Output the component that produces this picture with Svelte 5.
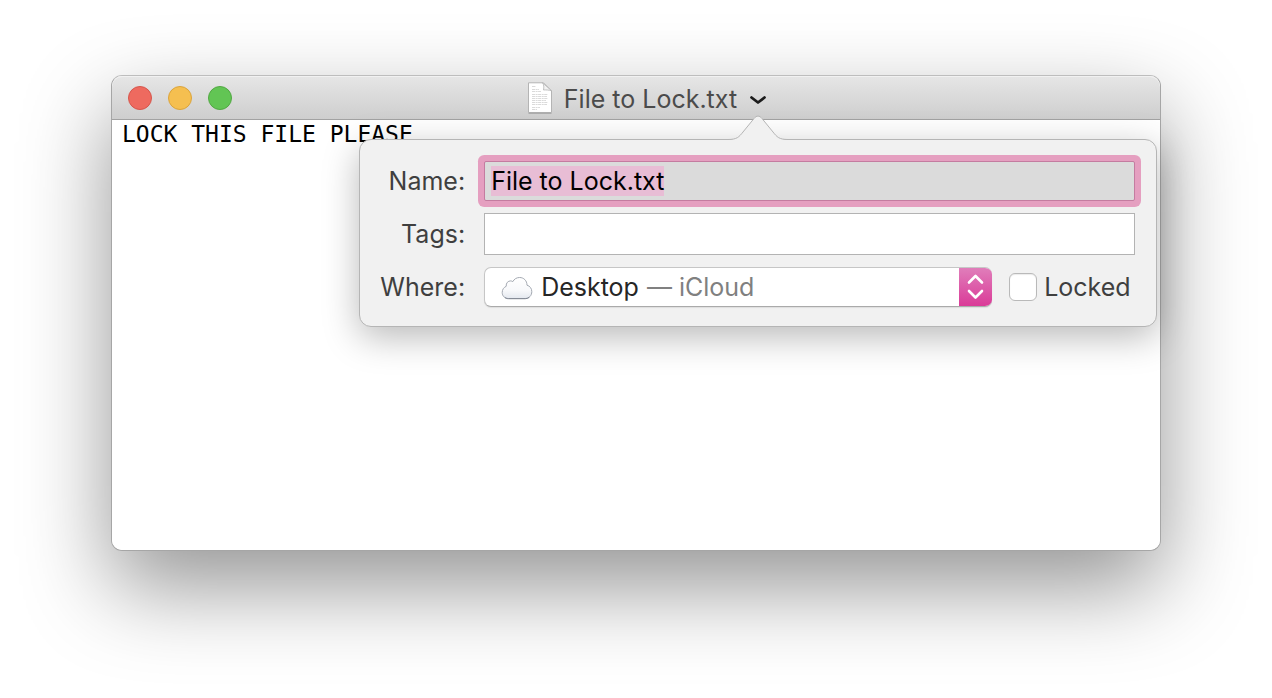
<script lang="ts">
  import { onMount } from 'svelte';

  let name = $state('File to Lock.txt');
  let tags = $state('');
  let place = $state('Desktop');
  let locked = $state(false);
  let body = $state('LOCK THIS FILE PLEASE');
  let open = $state(true);

  let nameInput: HTMLInputElement;

  // lines of tiny print on the document icon: y, start, end
  const print = [
    [4, 5, 9], [7, 5, 12], [9, 5, 14], [12, 5, 21], [14, 5, 20], [16, 5, 21],
    [18, 5, 19], [20, 5, 21], [22, 5, 20], [25, 5, 13], [27, 5, 10]
  ];

  onMount(() => {
    nameInput.focus();
    nameInput.select();
  });
</script>

<main class="desktop">
  <section class="window">
    <header class="titlebar">
      <div class="lights">
        <button class="light close" aria-label="Close"></button>
        <button class="light minimize" aria-label="Minimize"></button>
        <button class="light zoom" aria-label="Zoom"></button>
      </div>

      <div class="title">
        <svg class="doc" width="26" height="32" viewBox="0 0 26 32" aria-hidden="true">
          <path d="M1.5 .8H16.5L24.5 8.8V30.5H1.5Z" fill="#fff" stroke="#b4b4b4" stroke-width="1" />
          {#each print as [y, from, to]}
            <path d="M{from} {y + 0.5}H{to}" stroke="#dadada" stroke-width="1" stroke-dasharray="3 .6 2 .5" />
          {/each}
          <path d="M15.5 .8C17 3 17 5 16.5 8C19 7.8 22 8 24.5 8.8Z" fill="#f2f2f2" stroke="#b4b4b4" stroke-width=".8" />
          <path d="M1.5 31.3H24.5" stroke="#999" stroke-width=".8" />
        </svg>
        <span>{name}</span>
      </div>

      <div class="anchor">
        <button class="disclose" aria-label="Document options" onclick={() => open = !open}>
          <svg width="18" height="12" viewBox="0 0 18 12" aria-hidden="true">
            <path d="M2.5 3.5L9 8.5L15.5 3.5" fill="none" stroke="#1c1c1c" stroke-width="2.8" stroke-linecap="round" stroke-linejoin="round" />
          </svg>
        </button>

        <form class="popover" class:hidden={!open} onsubmit={(e) => e.preventDefault()}>
          <svg class="arrow" width="60" height="26" viewBox="0 0 60 26" aria-hidden="true">
            <path d="M0 24.5C9 24.5 11 22 15 17L26 3.5C28.5 .3 31.5 .3 34 3.5L45 17C49 22 51 24.5 60 24.5V26H0Z" fill="#f1f1f1" />
            <path d="M0 24.5C9 24.5 11 22 15 17L26 3.5C28.5 .3 31.5 .3 34 3.5L45 17C49 22 51 24.5 60 24.5" fill="none" stroke="#b5b5b5" />
          </svg>

          <label for="name">Name:</label>
          <input id="name" class="field name" type="text" bind:value={name} bind:this={nameInput} autocomplete="off" spellcheck="false" />

          <label for="tags">Tags:</label>
          <input id="tags" class="field tags" type="text" bind:value={tags} autocomplete="off" />

          <label for="where">Where:</label>
          <div class="row">
            <div class="picker">
              <svg class="cloud" width="32" height="24" viewBox="0 0 32 24" aria-hidden="true">
                <defs>
                  <linearGradient id="sky" x1="0" y1="0" x2="0" y2="1">
                    <stop offset="0" stop-color="#fff" />
                    <stop offset=".6" stop-color="#f8f9fb" />
                    <stop offset="1" stop-color="#e4e8ef" />
                  </linearGradient>
                </defs>
                <path d="M7.5 22.5C3.5 22.5 1.2 19.8 1.2 16.5C1.2 13.5 2.8 11.3 5.2 10.3C4.8 7 7.2 4.8 9.6 4.9C10.4 4.9 11.2 5.2 11.8 5.6C13.2 3 15.6 1.5 18.6 1.5C22.8 1.5 26 4.7 26 9.2C28.9 10 30.8 12.5 30.8 15.6C30.8 19.5 28.2 22.5 24.2 22.5Z" fill="url(#sky)" stroke="#a3a8b1" stroke-width="1" />
                <path d="M4 21.5C5 22.4 6.2 22.7 7.5 22.7H24.2C25.8 22.7 27.2 22.2 28.2 21.3" fill="none" stroke="#7f8692" stroke-width="1" />
              </svg>
              <select id="where" bind:value={place}>
                <option>Desktop</option>
              </select>
              <span class="source">— iCloud</span>
              <span class="stepper">
                <svg width="33" height="40" viewBox="0 0 33 40" aria-hidden="true">
                  <path d="M10 15.5L16.5 9L23 15.5M10 24L16.5 30.5L23 24" fill="none" stroke="#fff" stroke-width="2.6" stroke-linecap="round" stroke-linejoin="round" />
                </svg>
              </span>
            </div>
            <label class="lock">
              <input type="checkbox" bind:checked={locked} />
              <span>Locked</span>
            </label>
          </div>
        </form>
      </div>
    </header>

    <textarea class="text" aria-label="Document text" spellcheck="false" bind:value={body}></textarea>
  </section>
</main>

<style>
  :global(body) { background: #fff; }

  .desktop {
    box-sizing: border-box; min-height: 100vh; padding: 75px 111px 147px;
    display: flex; overflow: hidden;
    font-family: Inter, "Liberation Sans", sans-serif; font-size: 25px; line-height: 32px; color: #3f3f3f;
  }
  .window {
    flex: 1; display: flex; flex-direction: column; background: #fff;
    border: 1px solid #a6a6a6; border-top-color: #bdbdbd; border-radius: 11px;
    box-shadow: 0 36px 88px rgba(0,0,0,0.42);
  }
  button { border: none; padding: 0; background: none; cursor: pointer; }

  .titlebar {
    display: grid; grid-template-columns: 1fr auto 1fr; align-items: center;
    height: 43px; padding: 0 24px 0 16px;
    background: linear-gradient(#e6e6e6, #cecece);
    border-bottom: 1px solid #a2a2a2; border-radius: 10px 10px 0 0;
    box-shadow: inset 0 1px #f1f1f1;
  }
  .lights { display: flex; gap: 16px; }
  .light { box-sizing: border-box; width: 24px; height: 24px; border-radius: 50%; }
  .close { background: #ee6a5f; border: 1px solid #d6564c; }
  .minimize { background: #f5bf50; border: 1px solid #dba43c; }
  .zoom { background: #62c554; border: 1px solid #52a843; }

  .title { display: flex; align-items: center; gap: 11px; color: #4b4b4b; padding-top: 2px; }
  .doc { display: block; margin-top: -2px; }

  .anchor { position: relative; justify-self: start; align-self: stretch; display: flex; margin-left: 12px; }
  .disclose { display: flex; align-items: center; padding-top: 4px; }

  .popover {
    position: absolute; top: calc(100% + 20px); left: 50%; transform: translateX(-50%); z-index: 10;
    box-sizing: border-box; width: 798px; padding: 21px 21px 19px 19px;
    display: grid; grid-template-columns: 86px 1fr; gap: 12px 19px; align-items: center;
    background: #f1f1f1; border: 1px solid #b5b5b5; border-radius: 12px;
    box-shadow: 0 10px 36px rgba(0,0,0,0.28);
  }
  .popover.hidden { display: none; }
  .arrow { position: absolute; top: -25px; left: 50%; transform: translateX(-50%); }
  .popover > label { text-align: right; white-space: nowrap; }

  .field {
    box-sizing: border-box; width: 100%; margin: 0; padding: 0 6px;
    border: 1px solid #b3b3b3; border-radius: 0; background: #fff; outline: none;
    font: inherit; color: #000;
  }
  .name { height: 40px; background: #dbdbdb; border-color: #c47ca0; border-radius: 2px; box-shadow: 0 0 0 6px #e59fc0; }
  .name::selection { background: rgba(232,188,212,0.99); color: #000; }
  .tags { height: 42px; }

  .row { display: flex; align-items: center; gap: 17px; }
  .picker {
    box-sizing: border-box; width: 508px; height: 40px; padding-left: 16px;
    display: flex; align-items: center; overflow: hidden;
    background: #fff; border: 1px solid #c6c6c6; border-bottom-color: #aaa; border-right: none; border-radius: 7px;
    box-shadow: 0 1px 1px rgba(0,0,0,0.08);
  }
  .picker select {
    appearance: none; field-sizing: content; margin: 0 8px; padding: 0; border: none; outline: none;
    background: none; font: inherit; color: #262626;
  }
  .cloud { margin-top: 2px; }
  .source { color: #808080; }
  .stepper { margin-left: auto; height: 40px; background: linear-gradient(#e07fbb, #da3997); }
  .stepper svg { display: block; }

  .lock { display: flex; align-items: center; gap: 7px; }
  .lock input {
    appearance: none; box-sizing: border-box; width: 28px; height: 28px; margin: 0;
    background: #fff; border: 1px solid #b9b9b9; border-radius: 6px;
    box-shadow: inset 0 1px 1px rgba(0,0,0,0.08);
  }
  .lock input:checked { background: #da3997; }

  .text {
    flex: 1; margin: 0; padding: 0 10px; border: none; outline: none; resize: none;
    border-radius: 0 0 10px 10px; background: #fff; color: #000;
    font-family: "DejaVu Sans Mono", monospace; font-size: 23px; line-height: 28px;
  }
</style>
